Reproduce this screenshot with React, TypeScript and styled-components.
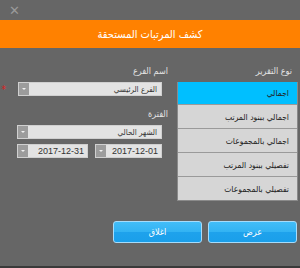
import { useState } from "react";
import styled, { createGlobalStyle } from "styled-components";

const GlobalStyle = createGlobalStyle`
  html, body { margin: 0; padding: 0; background: #666666; }
  body { font-family: "DejaVu Sans Condensed", "DejaVu Sans", sans-serif; }
`;

const Dialog = styled.div`
  width: 300px;
  height: 268px;
  box-sizing: border-box;
  background: #666666;
  border-bottom: 2px solid #3a3a3a;
  direction: rtl;
  display: flex;
  flex-direction: column;
`;

const TopStrip = styled.div`
  height: 20px;
  display: flex;
  align-items: center;
  direction: ltr;
  padding-left: 9px;
`;

const CloseBtn = styled.span`
  color: #9a9a9a;
  font-size: 13px;
  line-height: 1;
  font-family: "DejaVu Sans", sans-serif;
  cursor: pointer;
`;

const Header = styled.div`
  height: 28px;
  background: #ff8100;
  color: #fff;
  display: flex;
  align-items: center;
  justify-content: center;
  font-size: 11px;
`;

const Content = styled.div`
  display: flex;
  padding: 17px 2px 0 0;
  gap: 9px;
`;

const RightCol = styled.div`
  width: 121px;
  display: flex;
  flex-direction: column;
`;

const LeftCol = styled.div`
  width: 168px;
  display: flex;
  flex-direction: column;
`;

const Label = styled.div<{ $pad?: number }>`
  color: #e2e2e2;
  font-size: 9px;
  height: 12px;
  line-height: 12px;
  padding-right: ${(p) => p.$pad ?? 0}px;
  margin-bottom: 5px;
`;

const ReportList = styled.div`
  background: #d6d6d6;
  border: 1px solid #8a8a8a;
  border-top: none;
  display: flex;
  flex-direction: column;
`;

const ReportItem = styled.div<{ $active: boolean }>`
  height: 24px;
  box-sizing: border-box;
  display: flex;
  align-items: center;
  padding-right: 8px;
  font-size: 8.5px;
  color: #222;
  background: ${(p) => (p.$active ? "#00bfff" : "#d6d6d6")};
  border-top: 1px solid #9a9a9a;
  cursor: pointer;
  &:first-child { height: 22px; border-top: none; }
`;

const FieldRow = styled.div<{ $mb?: number }>`
  display: flex;
  align-items: center;
  gap: 7px;
  margin-bottom: ${(p) => p.$mb ?? 0}px;
`;

const Required = styled.span`
  color: #e02020;
  font-size: 10px;
  width: 6px;
  margin-right: 5px;
`;

const Select = styled.div<{ $w: number; $right?: number }>`
  width: ${(p) => p.$w}px;
  height: 14px;
  margin-right: ${(p) => p.$right ?? 0}px;
  display: flex;
  background: #e3e3e3;
  box-sizing: border-box;
  border: 1px solid #d0d0d0;
`;

const SelectText = styled.div`
  flex: 1;
  font-size: 8px;
  color: #333;
  display: flex;
  align-items: center;
  padding-right: 4px;
  white-space: nowrap;
  overflow: hidden;
`;

const DateText = styled(SelectText)`
  font-family: "Liberation Sans", sans-serif;
  font-size: 9px;
  padding-right: 3px;
`;

const Arrow = styled.div`
  width: 10px;
  background: #9c9c9c;
  display: flex;
  align-items: center;
  justify-content: center;
  &::after {
    content: "";
    border-left: 2px solid transparent;
    border-right: 2px solid transparent;
    border-top: 2px solid #f0f0f0;
  }
`;

const Buttons = styled.div`
  display: flex;
  gap: 6px;
  padding: 0 3px 0 0;
  margin-top: 20px;
`;

const Btn = styled.button`
  width: 89px;
  height: 22px;
  border: 1px solid #a6dcfb;
  border-radius: 3px;
  background: linear-gradient(#42bdf8 0%, #33b3f3 48%, #1ea2ec 52%, #1a9fea 100%);
  color: #fff;
  font-family: "DejaVu Sans Condensed", "DejaVu Sans", sans-serif;
  font-size: 9px;
  padding: 0;
  cursor: pointer;
`;

const reportTypes = [
  "اجمالي",
  "اجمالي ببنود المرتب",
  "اجمالي بالمجموعات",
  "تفصيلي ببنود المرتب",
  "تفصيلي بالمجموعات",
];

export default function App() {
  const [selected, setSelected] = useState(0);

  return (
    <>
      <GlobalStyle />
      <Dialog>
        <TopStrip>
          <CloseBtn>✕</CloseBtn>
        </TopStrip>
        <Header>كشف المرتبات المستحقة</Header>

        <Content>
          <RightCol>
            <Label $pad={6}>نوع التقرير</Label>
            <ReportList>
              {reportTypes.map((t, i) => (
                <ReportItem key={t} $active={i === selected} onClick={() => setSelected(i)}>
                  {t}
                </ReportItem>
              ))}
            </ReportList>
          </RightCol>

          <LeftCol>
            <Label>اسم الفرع</Label>
            <FieldRow $mb={12}>
              <Select $w={145} $right={6}>
                <SelectText>الفرع الرئيسي</SelectText>
                <Arrow />
              </Select>
              <Required>*</Required>
            </FieldRow>

            <Label>الفترة</Label>
            <FieldRow $mb={5}>
              <Select $w={145} $right={6}>
                <SelectText>الشهر الحالي</SelectText>
                <Arrow />
              </Select>
            </FieldRow>
            <FieldRow>
              <Select $w={67} $right={6}>
                <DateText>2017-12-01</DateText>
                <Arrow />
              </Select>
              <Select $w={71}>
                <DateText>2017-12-31</DateText>
                <Arrow />
              </Select>
            </FieldRow>
          </LeftCol>
        </Content>

        <Buttons>
          <Btn>عرض</Btn>
          <Btn>اغلاق</Btn>
        </Buttons>
      </Dialog>
    </>
  );
}
